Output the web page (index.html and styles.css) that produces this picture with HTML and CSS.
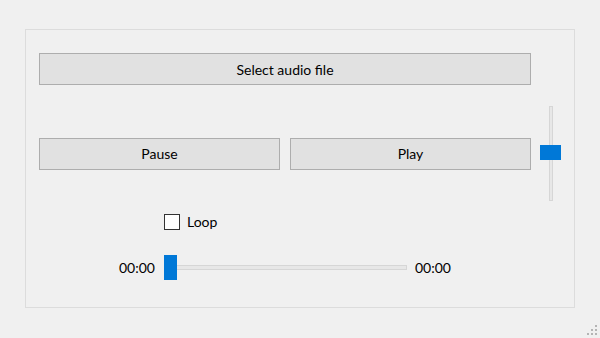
FILE: index.html
```html
<!DOCTYPE html>
<html lang="en">
<head>
    <meta charset="UTF-8">
    <meta name="viewport" content="width=device-width, initial-scale=1.0">
    <title>Audio Player</title>
    <link rel="stylesheet" href="styles.css">
</head>
<body>
    <div class="frame">
        <!-- File picker -->
        <button class="btn btn-wide" type="button">Select audio file</button>

        <!-- Transport controls and volume -->
        <div class="transport">
            <button class="btn" type="button">Pause</button>
            <button class="btn" type="button">Play</button>
            <div class="volume">
                <div class="volume-track"></div>
                <div class="volume-handle"></div>
            </div>
        </div>

        <div class="loop-row">
            <label class="loop">
                <span class="checkbox"></span>
                <span>Loop</span>
            </label>
        </div>

        <!-- Position -->
        <div class="seek-row">
            <span class="time">00:00</span>
            <div class="seek">
                <div class="seek-track"></div>
                <div class="seek-handle"></div>
            </div>
            <span class="time">00:00</span>
        </div>
    </div>

    <svg class="grip" width="11" height="11" viewBox="0 0 11 11">
        <rect x="8" y="0" width="2" height="2" fill="#b4b4b4"/>
        <rect x="4" y="4" width="2" height="2" fill="#b4b4b4"/>
        <rect x="8" y="4" width="2" height="2" fill="#b4b4b4"/>
        <rect x="0" y="8" width="2" height="2" fill="#b4b4b4"/>
        <rect x="4" y="8" width="2" height="2" fill="#b4b4b4"/>
        <rect x="8" y="8" width="2" height="2" fill="#b4b4b4"/>
    </svg>
</body>
</html>
```

FILE: styles.css
```css
* {
    box-sizing: border-box;
    margin: 0;
    padding: 0;
}

body {
    font-family: 'Lato', 'Open Sans', sans-serif;
    font-size: 14px;
    color: #000000;
    background-color: #f0f0f0;
    height: 338px;
    overflow: hidden;
}

.frame {
    width: 550px;
    height: 279px;
    margin: 29px 0 0 25px;
    padding: 23px 0 0 13px;
    border: 1px solid #dcdcdc;
    display: flex;
    flex-direction: column;
}

.btn {
    width: 241px;
    height: 32px;
    background-color: #e1e1e1;
    border: 1px solid #adadad;
    font-family: inherit;
    font-size: 14px;
    color: #000000;
}

.btn-wide {
    width: 492px;
}

.transport {
    display: flex;
    align-items: center;
    gap: 10px;
    height: 95px;
    margin-top: 21px;
}

.volume {
    position: relative;
    width: 21px;
    height: 95px;
    margin-left: -1px;
}

.volume-track {
    width: 4px;
    height: 95px;
    margin: 0 auto;
    background-color: #e7e7e7;
    border: 1px solid #d6d6d6;
}

.volume-handle {
    position: absolute;
    left: 0;
    top: 39px;
    width: 21px;
    height: 15px;
    background-color: #0078d7;
}

.loop-row {
    margin-top: 12px;
    padding-left: 125px;
}

.loop {
    display: flex;
    align-items: center;
    gap: 7px;
    height: 17px;
}

.checkbox {
    width: 16px;
    height: 16px;
    background-color: #ffffff;
    border: 1px solid #333333;
}

.seek-row {
    display: flex;
    align-items: center;
    gap: 8px;
    height: 25px;
    margin-top: 25px;
    padding-left: 80px;
}

.time {
    width: 37px;
}

.seek {
    position: relative;
    width: 243px;
    height: 25px;
    display: flex;
    align-items: center;
}

.seek-track {
    width: 100%;
    height: 5px;
    background-color: #e7e7e7;
    border: 1px solid #d6d6d6;
}

.seek-handle {
    position: absolute;
    left: 0;
    top: 0;
    width: 13px;
    height: 25px;
    background-color: #0078d7;
}

.grip {
    position: absolute;
    left: 587px;
    top: 325px;
}
```
